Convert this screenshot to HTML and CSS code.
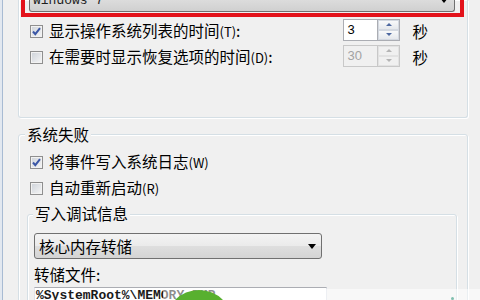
FILE: index.html
```html
<!DOCTYPE html>
<html lang="zh-CN">
<head>
  <meta charset="UTF-8">
  <meta name="viewport" content="width=device-width, initial-scale=1.0">
  <title>启动和故障恢复</title>
  <link rel="stylesheet" href="styles.css">
</head>
<body>
  <!-- 系统启动 (top of the box is scrolled off) -->
  <div class="group group-cut">
    <div class="highlight">
      <div class="combo combo-cut">
        <span class="combo-text">Windows 7</span>
        <span class="combo-arrow"></span>
      </div>
    </div>
    <div class="rows">
      <div class="row">
        <span class="check"><svg width="11" height="11" viewBox="0 0 11 11"><path d="M2 5.5 L4.3 8.2 L9 2.2" fill="none" stroke="#3b57a6" stroke-width="2"/></svg></span>
        <span class="label">显示操作系统列表的时间<span class="key">(T)</span>:</span>
        <span class="spin">
          <span class="spin-field">3</span>
          <span class="spin-btns"><span class="up"></span><span class="down"></span></span>
        </span>
        <span class="unit">秒</span>
      </div>
      <div class="row">
        <span class="check"></span>
        <span class="label">在需要时显示恢复选项的时间<span class="key">(D)</span>:</span>
        <span class="spin disabled">
          <span class="spin-field">30</span>
          <span class="spin-btns"><span class="up"></span><span class="down"></span></span>
        </span>
        <span class="unit">秒</span>
      </div>
    </div>
  </div>

  <!-- 系统失败 -->
  <div class="group group-fail">
    <div class="group-title">系统失败</div>
    <div class="rows">
      <div class="row">
        <span class="check"><svg width="11" height="11" viewBox="0 0 11 11"><path d="M2 5.5 L4.3 8.2 L9 2.2" fill="none" stroke="#3b57a6" stroke-width="2"/></svg></span>
        <span class="label">将事件写入系统日志<span class="key">(W)</span></span>
      </div>
      <div class="row">
        <span class="check"></span>
        <span class="label">自动重新启动<span class="key">(R)</span></span>
      </div>
    </div>

    <div class="group group-inner">
      <div class="group-title">写入调试信息</div>
      <div class="combo combo-dump">
        <span class="combo-label">核心内存转储</span>
        <span class="combo-arrow"></span>
      </div>
      <div class="field-label">转储文件:</div>
      <div class="path">%SystemRoot%\MEMORY.DMP</div>
    </div>
  </div>

  <!-- watermark over the bottom edge -->
  <div class="watermark"></div>
  <div class="badge"></div>
  <div class="badge-dot"></div>
</body>
</html>
```

FILE: styles.css
```css
html, body {
  margin: 0;
  height: 300px;
  overflow: hidden;
}
body {
  background: #f0f0f0;
  font-family: "Noto Sans CJK SC", sans-serif;
  font-size: 15.5px;
  color: #000;
  border-left: 2px solid #e2e8f0;
  box-shadow: inset 1px 0 #a8bbd3;
  padding-left: 16px;
}
.group {
  box-sizing: border-box;
  border: 1px solid #d5dfe5;
  border-radius: 3px;
  box-shadow: inset 1px 1px #fff, 1px 1px #fff;
}
.group-cut,
.group-fail {
  width: 450px;
}
.group-cut {
  border-top: none;
  border-radius: 0 0 3px 3px;
  padding-bottom: 47px;
}
.group-fail {
  margin-top: 16px;
  padding-bottom: 40px;
}
.group-title {
  width: fit-content;
  margin: -9px 0 0 6px;
  padding: 0 2px;
  background: #f0f0f0;
  line-height: 17px;
}
.group-inner {
  margin: 13px 10px 0 8px;
  padding-bottom: 20px;
}
.group-inner .group-title {
  margin: -10px 0 0 5px;
}

/* red marker round the OS list */
.highlight {
  margin: 0 3px 0 2px;
  border: 4px solid #e3121b;
  border-top: none;
  padding: 0 5px 1px 4px;
}

/* combo boxes */
.combo {
  box-sizing: border-box;
  display: flex;
  border: 1px solid #707070;
  border-radius: 3px;
  background: linear-gradient(#f3f3f3, #ebebeb 48%, #dedede 52%, #d4d4d4);
}
.combo-arrow {
  margin-left: auto;
  width: 0;
  height: 0;
  border-left: 4px solid transparent;
  border-right: 4px solid transparent;
  border-top: 5px solid #000;
}
.combo-cut {
  height: 12px;
  border-top: none;
  border-radius: 0 0 3px 3px;
  overflow: hidden;
  align-items: flex-start;
  padding: 0 6px 0 3px;
  background: linear-gradient(#dcdcdc, #d0d0d0);
}
.combo-text {
  margin-top: -6px;
  font: 13px/13px "Liberation Mono", monospace;
  color: #1e1e1e;
}
.combo-cut .combo-arrow {
  margin-top: -2px;
}
.combo-dump {
  width: 288px;
  height: 26px;
  margin: 11px 0 0 6px;
  align-items: center;
  padding: 0 5px 0 4px;
}
.combo-label {
  line-height: 17px;
}

/* checkbox rows */
.rows {
  margin-top: 1px;
}
.group-fail > .rows {
  margin-top: 6px;
}
.row {
  display: flex;
  align-items: center;
  height: 26px;
  padding: 0 39px 0 11px;
}
.check {
  flex: none;
  box-sizing: border-box;
  width: 13px;
  height: 13px;
  margin-right: 6px;
  border: 1px solid #8f8f8f;
  background: linear-gradient(135deg, #cdd2d9, #f6f6f6);
  box-shadow: inset 0 0 0 1px #f2f2f2;
  display: flex;
  align-items: center;
  justify-content: center;
}
.check svg {
  display: block;
}
.label {
  flex: 1;
  white-space: nowrap;
  line-height: 17px;
}
.key {
  font-size: 13px;
}
.unit {
  margin-left: 12px;
  line-height: 17px;
}

/* spin boxes */
.spin {
  display: flex;
  height: 22px;
  margin-top: -3px;
}
.spin-field {
  box-sizing: border-box;
  width: 34px;
  border: 1px solid #abadb3;
  border-right: none;
  background: #fff;
  padding-left: 3px;
  font: 13px/20px "Liberation Sans", sans-serif;
}
.spin-btns {
  box-sizing: border-box;
  width: 23px;
  display: flex;
  flex-direction: column;
  border: 1px solid #abadb3;
}
.spin-btns span {
  flex: 1;
  display: flex;
  align-items: center;
  justify-content: center;
  border: 1px solid #d3d8e0;
  background: linear-gradient(#f8f9fa, #e5e8ec);
}
.spin-btns .up::before,
.spin-btns .down::before {
  content: "";
  border-left: 3px solid transparent;
  border-right: 3px solid transparent;
}
.spin-btns .up::before {
  border-bottom: 3px solid #4d68a0;
}
.spin-btns .down::before {
  border-top: 3px solid #4d68a0;
}
.spin.disabled .spin-field {
  background: #f0f0f0;
  color: #a3a3a3;
  border-color: #c8c8c8;
}
.spin.disabled .spin-btns {
  border-color: #c8c8c8;
}
.spin.disabled .spin-btns span {
  border-color: #e2e2e2;
  background: #f0f0f0;
}
.spin.disabled .up::before {
  border-bottom-color: #b4b4b4;
}
.spin.disabled .down::before {
  border-top-color: #b4b4b4;
}

/* dump file */
.field-label {
  margin: 7px 0 0 6px;
  line-height: 17px;
}
.path {
  box-sizing: border-box;
  width: 293px;
  height: 30px;
  margin: 4px 0 0 6px;
  border: 1px solid #abadb3;
  border-color: #abadb3 #dbdfe6 #e3e9ef #e2e3ea;
  background: #fff;
  padding: 1px 0 0 1px;
  font: bold 13px/13px "Liberation Mono", monospace;
  color: #1a1a1a;
}

/* watermark */
.watermark {
  position: absolute;
  left: 163px;
  top: 289px;
  width: 317px;
  height: 11px;
  background: rgba(255, 255, 255, 0.5);
}
.badge {
  position: absolute;
  left: 165px;
  top: 290px;
  width: 68px;
  height: 68px;
  border-radius: 50%;
  background: #58b02f;
}
.badge-dot {
  position: absolute;
  left: 451px;
  top: 297px;
  width: 3px;
  height: 3px;
  border-radius: 50%;
  background: #7fbfae;
}
```
